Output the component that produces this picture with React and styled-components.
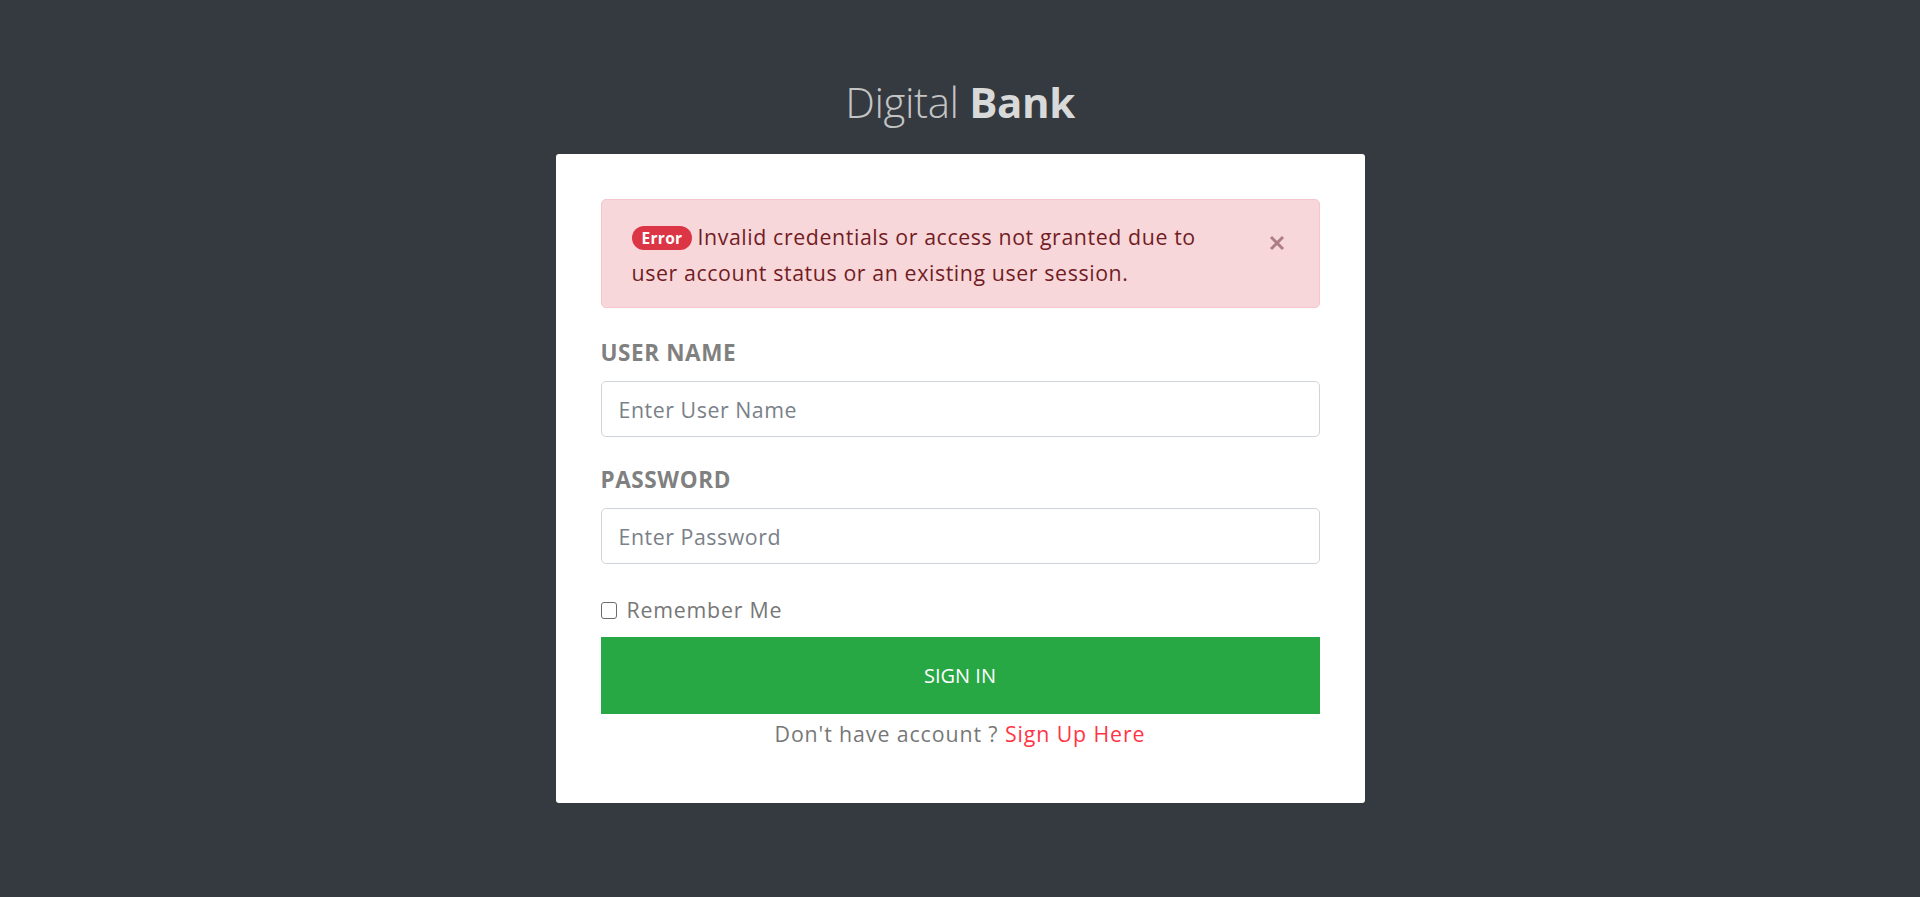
import React from "react";
import styled, { createGlobalStyle } from "styled-components";

const GlobalStyle = createGlobalStyle`
  html, body { margin: 0; padding: 0; }
  body {
    background: #343a40;
    font-family: "Open Sans", "Noto Sans", "Liberation Sans", sans-serif;
    min-height: 100vh;
  }
  * { box-sizing: border-box; }
`;

const Page = styled.div`
  display: flex;
  flex-direction: column;
  align-items: center;
  padding-top: 77px;
  min-height: 897px;
`;

const Title = styled.h1`
  margin: 0 0 27px;
  font-size: 42px;
  line-height: 50px;
  font-weight: 300;
  color: #c4c4c4;
  letter-spacing: -0.4px;
  b {
    font-weight: 700;
    color: #d9d9d9;
  }
`;

const Card = styled.div`
  width: 809px;
  background: #fff;
  border-radius: 3px;
  padding: 45px 45px 54px;
`;

const Alert = styled.div`
  display: flex;
  align-items: flex-start;
  gap: 28px;
  height: 109px;
  padding: 19px 34px 0 30px;
  background: #f8d7da;
  border: 1px solid #f5c6cb;
  border-radius: 5px;
  color: #721c24;
  font-size: 21.33px;
  letter-spacing: 0.6px;
  line-height: 36px;
`;

const AlertText = styled.div`
  flex: 1;
`;

const Badge = styled.span`
  display: inline-block;
  height: 24px;
  padding: 0 10px;
  margin-right: 5px;
  border-radius: 12px;
  background: #dc3545;
  color: #fff;
  font-size: 15.5px;
  font-weight: 700;
  letter-spacing: 0.3px;
  line-height: 24px;
  vertical-align: 1px;
`;

const Close = styled.button`
  flex: none;
  width: 16px;
  height: 16px;
  margin-top: 16px;
  padding: 0;
  border: 0;
  background: none;
  cursor: pointer;
  display: flex;
`;

const Group = styled.div`
  display: flex;
  flex-direction: column;
  margin-top: ${(p) => p.$top}px;
`;

const Label = styled.label`
  font-size: 22.5px;
  letter-spacing: 0.6px;
  line-height: 30px;
  font-weight: 700;
  color: #808080;
  margin-bottom: 13px;
`;

const Input = styled.input`
  height: 56px;
  width: 100%;
  border: 1px solid #ced4da;
  border-radius: 5px;
  padding: 0 17px;
  font-family: inherit;
  font-size: 21.33px;
  letter-spacing: 0.55px;
  color: #495057;
  background: #fff;
  &::placeholder {
    color: #7a8188;
  }
`;

const CheckRow = styled.label`
  display: flex;
  align-items: center;
  gap: 10px;
  margin-top: 31px;
  font-size: 21.33px;
  letter-spacing: 0.8px;
  line-height: 30px;
  color: #777;
`;

const Check = styled.span`
  width: 16px;
  height: 17px;
  border: 1.5px solid #6b6b6b;
  border-radius: 3px;
  background: #fff;
`;

const Button = styled.button`
  display: block;
  width: 100%;
  height: 77px;
  margin-top: 12px;
  border: 0;
  background: #28a745;
  color: #fff;
  font-family: inherit;
  font-size: 20px;
  text-transform: uppercase;
  cursor: pointer;
`;

const Footer = styled.p`
  margin: 5px 0 0;
  text-align: center;
  font-size: 21.33px;
  letter-spacing: 0.9px;
  line-height: 30px;
  color: #777;
  a {
    color: #ff3547;
    text-decoration: none;
  }
`;

export default function App() {
  return (
    <>
      <GlobalStyle />
      <Page>
        <Title>
          Digital <b>Bank</b>
        </Title>
        <Card>
          <Alert>
            <AlertText>
              <Badge>Error</Badge>Invalid credentials or access not granted due to user account status or an existing user session.
            </AlertText>
            <Close aria-label="Close">
              <svg width="16" height="16" viewBox="0 0 16 16">
                <path d="M2 2 L14 14 M14 2 L2 14" stroke="#ad7d86" strokeWidth="3" strokeLinecap="butt" />
              </svg>
            </Close>
          </Alert>
          <Group $top={30}>
            <Label>USER NAME</Label>
            <Input placeholder="Enter User Name" />
          </Group>
          <Group $top={28}>
            <Label>PASSWORD</Label>
            <Input type="password" placeholder="Enter Password" />
          </Group>
          <CheckRow>
            <Check />
            Remember Me
          </CheckRow>
          <Button>Sign In</Button>
          <Footer>
            Don't have account ? <a href="#">Sign Up Here</a>
          </Footer>
        </Card>
      </Page>
    </>
  );
}
